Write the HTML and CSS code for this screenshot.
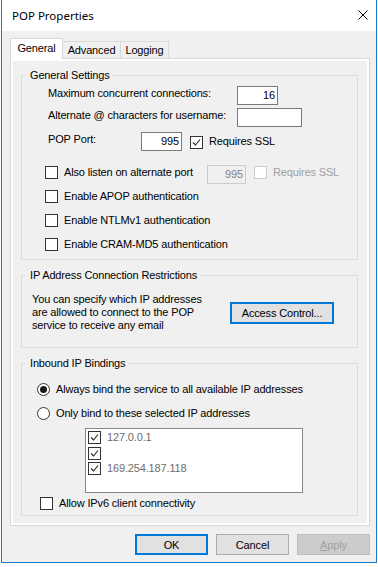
FILE: index.html
```html
<!DOCTYPE html>
<html lang="en">
<head>
    <meta charset="UTF-8">
    <title>POP Properties</title>
    <link rel="stylesheet" href="styles.css">
</head>
<body>
    <div class="window">
        <div class="titlebar">
            <span class="title">POP Properties</span>
            <svg class="close" width="10" height="10" viewBox="0 0 10 10">
                <path d="M0.5 0.5 L9.5 9.5 M9.5 0.5 L0.5 9.5" stroke="#000" stroke-width="1" fill="none"/>
            </svg>
        </div>

        <div class="client">
            <div class="tabs">
                <div class="tab active">General</div>
                <div class="tab">Advanced</div>
                <div class="tab">Logging</div>
            </div>

            <div class="panel">
                <!-- General settings -->
                <fieldset class="group group-general">
                    <legend>General Settings</legend>
                    <div class="row row-max">
                        <span class="label label-wide">Maximum concurrent connections:</span>
                        <span class="textbox tb-small">16</span>
                    </div>
                    <div class="row row-alt">
                        <span class="label label-wide">Alternate @ characters for username:</span>
                        <span class="textbox tb-wide"></span>
                    </div>
                    <div class="row row-port">
                        <span class="label label-port">POP Port:</span>
                        <span class="textbox tb-small">995</span>
                        <span class="check checked check-ssl">
                            <svg viewBox="0 0 11 11"><path d="M2 5.5 L4.5 8 L9 2.5" /></svg>
                        </span>
                        <span class="check-text">Requires SSL</span>
                    </div>
                    <div class="row row-altport">
                        <span class="check-wrap check-wrap-port">
                            <span class="check"></span>
                            <span class="check-text">Also listen on alternate port</span>
                        </span>
                        <span class="textbox tb-disabled">995</span>
                        <span class="check disabled check-ssl2"></span>
                        <span class="check-text muted">Requires SSL</span>
                    </div>
                    <div class="row check-row row-apop">
                        <span class="check"></span>
                        <span class="check-text">Enable APOP authentication</span>
                    </div>
                    <div class="row check-row row-auth">
                        <span class="check"></span>
                        <span class="check-text">Enable NTLMv1 authentication</span>
                    </div>
                    <div class="row check-row row-auth">
                        <span class="check"></span>
                        <span class="check-text">Enable CRAM-MD5 authentication</span>
                    </div>
                </fieldset>

                <!-- IP restrictions -->
                <fieldset class="group group-restrict">
                    <legend>IP Address Connection Restrictions</legend>
                    <div class="restrict-body">
                        <p class="restrict-text">You can specify which IP addresses<br>are allowed to connect to the POP<br>service to receive any email</p>
                        <button class="btn btn-focus btn-access">Access Control...</button>
                    </div>
                </fieldset>

                <!-- Bindings -->
                <fieldset class="group group-bind">
                    <legend>Inbound IP Bindings</legend>
                    <div class="row radio-row radio-first">
                        <span class="radio selected"></span>
                        <span class="radio-text">Always bind the service to all available IP addresses</span>
                    </div>
                    <div class="row radio-row radio-second">
                        <span class="radio"></span>
                        <span class="radio-text">Only bind to these selected IP addresses</span>
                    </div>
                    <div class="listbox">
                        <div class="list-item">
                            <span class="check checked small"><svg viewBox="0 0 11 11"><path d="M2 5.5 L4.5 8 L9 2.5" /></svg></span>
                            <span class="item-text">127.0.0.1</span>
                        </div>
                        <div class="list-item">
                            <span class="check checked small"><svg viewBox="0 0 11 11"><path d="M2 5.5 L4.5 8 L9 2.5" /></svg></span>
                            <span class="item-text"></span>
                        </div>
                        <div class="list-item">
                            <span class="check checked small"><svg viewBox="0 0 11 11"><path d="M2 5.5 L4.5 8 L9 2.5" /></svg></span>
                            <span class="item-text">169.254.187.118</span>
                        </div>
                    </div>
                    <div class="row check-row row-ipv6">
                        <span class="check"></span>
                        <span class="check-text">Allow IPv6 client connectivity</span>
                    </div>
                </fieldset>
            </div>

            <div class="footer">
                <button class="btn btn-focus">OK</button>
                <button class="btn">Cancel</button>
                <button class="btn btn-disabled"><u>A</u>pply</button>
            </div>
        </div>
    </div>
</body>
</html>
```

FILE: styles.css
```css
body {
    margin: 0;
    background: #ffffff;
    font-family: 'Liberation Sans', Arial, sans-serif;
    font-size: 11px;
    letter-spacing: -0.15px;
    color: #000000;
}

.window {
    margin-left: 1px;
    width: 376px;
    height: 563px;
    box-sizing: border-box;
    border: 1px solid #1979ca;
    border-top: none;
    background: #f0f0f0;
}

.titlebar {
    height: 31px;
    background: #ffffff;
    display: flex;
    align-items: center;
    justify-content: space-between;
    padding-left: 10px;
    padding-right: 8px;
}

.title {
    font-family: 'Noto Sans', 'Liberation Sans', sans-serif;
    font-size: 11.5px;
    letter-spacing: 0;
    margin-top: -1px;
}

.close {
    display: block;
    margin-top: -1px;
}

.client {
    padding: 7px 0 7px 8px;
}

/* tabs */
.tabs {
    display: flex;
    align-items: flex-end;
    height: 20px;
}

.tab {
    height: 17px;
    line-height: 16px;
    box-sizing: border-box;
    border: 1px solid #d9d9d9;
    border-bottom: none;
    background: #f0f0f0;
    text-align: center;
    margin-left: -1px;
}

.tab:nth-child(1) { width: 53px; margin-left: 0; }
.tab:nth-child(2) { width: 59px; }
.tab:nth-child(3) { width: 49px; }

.tab.active {
    height: 21px;
    line-height: 19px;
    background: #ffffff;
    margin-bottom: -1px;
    position: relative;
    z-index: 1;
}

.panel {
    width: 360px;
    height: 468px;
    box-sizing: border-box;
    border: 1px solid #d9d9d9;
    background: #f0f0f0;
    box-shadow: inset 0 0 0 2px #ffffff;
    padding: 10px 0 0 10px;
}

/* group boxes */
.group {
    width: 337px;
    box-sizing: border-box;
    margin: 0;
    padding: 0;
    border: 1px solid #dcdcdc;
    min-inline-size: 0;
}

.group legend {
    margin-left: 4px;
    padding: 0 3px 0 4px;
    line-height: 13px;
    height: 13px;
}

.group-general { padding: 4px 0 8px 0; }
.group-restrict { margin-top: 9px; padding: 11px 0 15px 0; }
.group-bind { margin-top: 9px; padding: 13px 0 5px 0; }

.row {
    display: flex;
    align-items: flex-start;
    height: 19px;
    padding-left: 26px;
}

.row-alt { margin-top: 3px; }
.row-port { margin-top: 5px; }
.row-altport { margin-top: 14px; padding-left: 23px; }

.check-row {
    height: 13px;
    align-items: center;
    padding-left: 23px;
}

.row-apop { margin-top: 6px; }
.row-auth { margin-top: 11px; }

.label {
    line-height: 13px;
    margin-top: 1px;
}

.label-wide { width: 189px; flex-shrink: 0; }
.label-port { width: 93px; flex-shrink: 0; }

.textbox {
    height: 19px;
    box-sizing: border-box;
    border: 1px solid #7a7a7a;
    background: #ffffff;
    text-align: right;
    padding-right: 2px;
    line-height: 17px;
}

.tb-small { width: 41px; }
.tb-wide { width: 65px; }

.tb-disabled {
    width: 39px;
    background: #f0f0f0;
    border-color: #cccccc;
    color: #838383;
}

/* checkboxes */
.check {
    width: 13px;
    height: 13px;
    box-sizing: border-box;
    border: 1px solid #333333;
    background: #ffffff;
    flex-shrink: 0;
    display: inline-flex;
}

.check svg {
    width: 11px;
    height: 11px;
}

.check svg path {
    fill: none;
    stroke: #222222;
    stroke-width: 1.1;
}

.check.disabled {
    border-color: #cccccc;
}

.check-text {
    margin-left: 6px;
    line-height: 13px;
    white-space: nowrap;
}

.muted {
    color: #a0a0a0;
}

.check-ssl { margin-left: 8px; margin-top: 4px; }
.row-port .check-text { margin-top: 3px; }

.check-wrap {
    display: flex;
    align-items: center;
    margin-top: 1px;
}

.check-wrap-port { width: 162px; flex-shrink: 0; }

.check-ssl2 { margin-left: 8px; margin-top: 1px; }
.row-altport .muted { margin-top: 1px; }

/* restrictions */
.restrict-body {
    display: flex;
    align-items: flex-start;
    padding-left: 10px;
}

.restrict-text {
    margin: 0;
    width: 198px;
    line-height: 13px;
}

.btn {
    font-family: 'Liberation Sans', Arial, sans-serif;
    font-size: 11px;
    letter-spacing: -0.15px;
    color: #000000;
    width: 73px;
    height: 21px;
    box-sizing: border-box;
    padding: 0;
    border: 1px solid #adadad;
    background: #e1e1e1;
}

.btn-focus {
    border: 2px solid #0078d7;
}

.btn-access {
    width: 104px;
    height: 22px;
    margin-top: 9px;
}

.btn-disabled {
    background: #cccccc;
    border-color: #bfbfbf;
    color: #a0a0a0;
}

/* radios */
.radio-row {
    height: 13px;
    align-items: center;
    padding-left: 15px;
}

.radio-second { margin-top: 11px; }

.radio {
    width: 13px;
    height: 13px;
    box-sizing: border-box;
    border: 1px solid #333333;
    border-radius: 50%;
    background: #ffffff;
    display: flex;
    align-items: center;
    justify-content: center;
    flex-shrink: 0;
}

.radio.selected::after {
    content: "";
    width: 7px;
    height: 7px;
    border-radius: 50%;
    background: #1a1a1a;
}

.radio-text {
    margin-left: 6px;
    line-height: 13px;
}

/* list box */
.listbox {
    margin: 8px 0 0 63px;
    width: 218px;
    height: 65px;
    box-sizing: border-box;
    border: 1px solid #828790;
    background: #ffffff;
    padding: 2px 0 0 2px;
}

.list-item {
    height: 15.5px;
    display: flex;
    align-items: flex-start;
}

.check.small {
    border-color: #333333;
}

.item-text {
    margin-left: 6px;
    line-height: 13px;
    color: #6d6d6d;
}

.row-ipv6 {
    margin-top: 4px;
    padding-left: 18px;
}

/* footer buttons */
.footer {
    display: flex;
    gap: 8px;
    margin-top: 8px;
    padding-left: 125px;
}
```
